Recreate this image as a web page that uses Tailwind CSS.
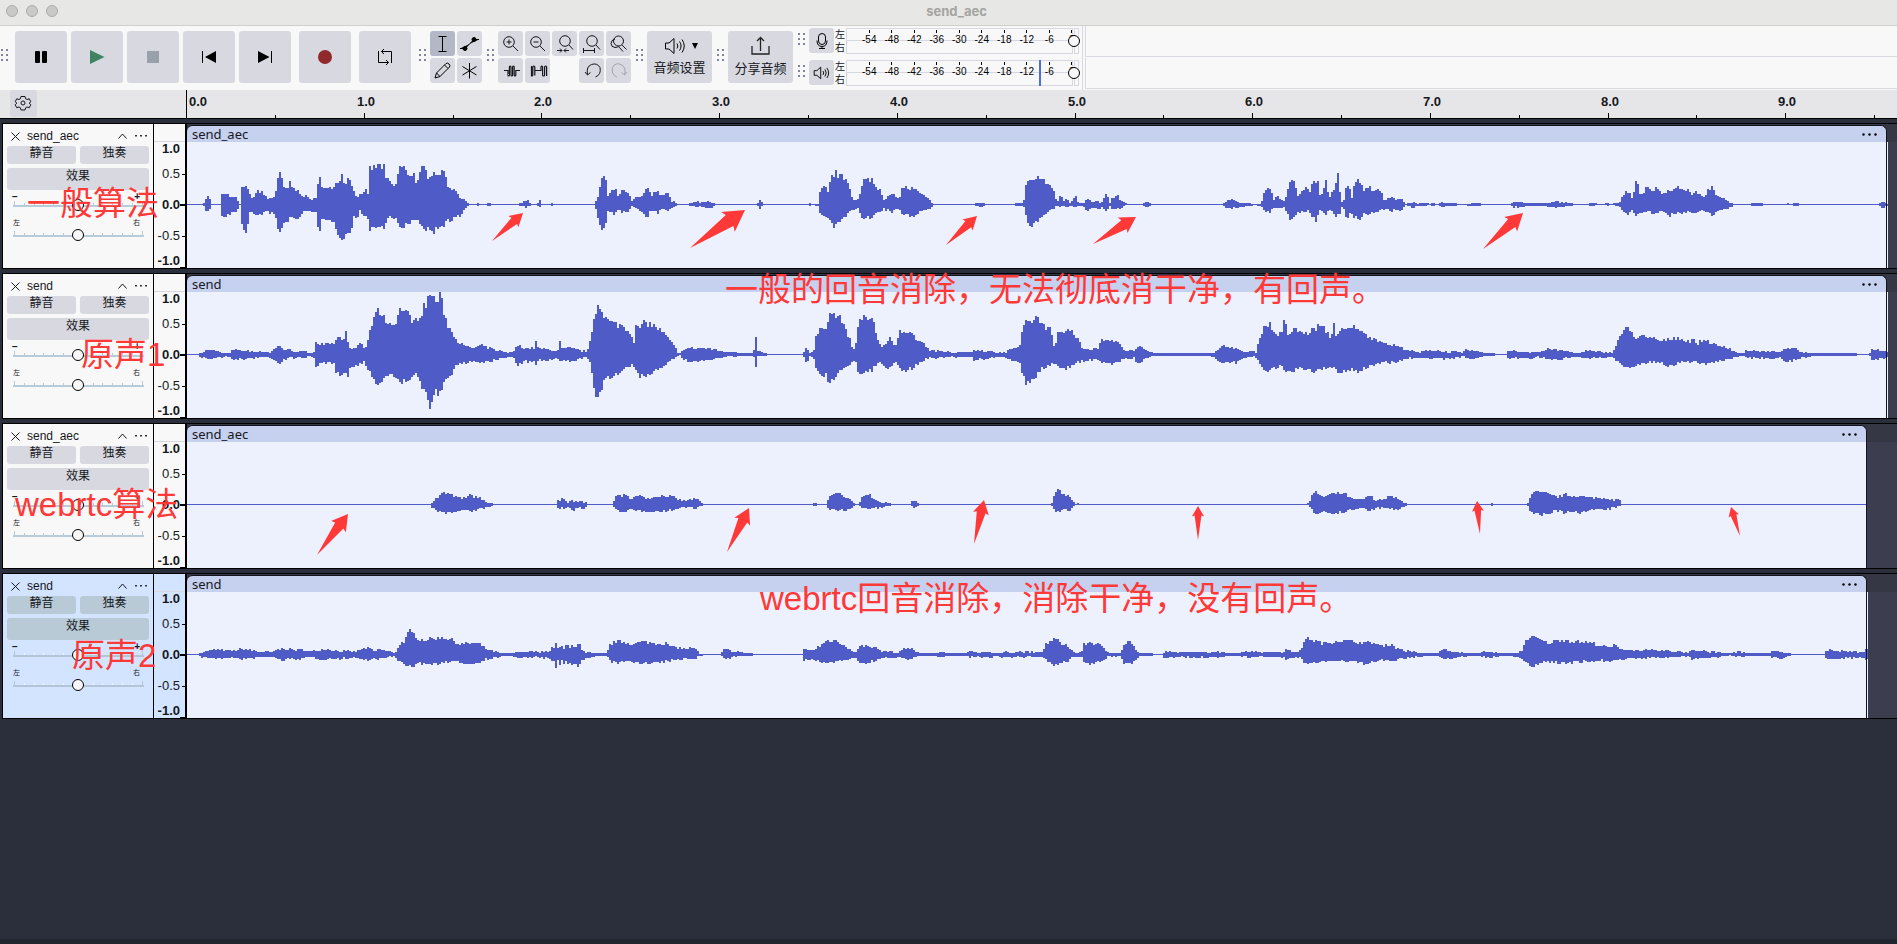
<!DOCTYPE html>
<html lang="zh-CN">
<head>
<meta charset="utf-8">
<title>send_aec</title>
<script src="https://cdn.jsdelivr.net/npm/@tailwindcss/browser@4"></script>
</head>
<body class="relative flex h-screen flex-col overflow-hidden bg-[#2b2f3b] font-['Liberation_Sans','Noto_Sans_CJK_SC',sans-serif] text-[#16181d]">

<svg class="hidden" aria-hidden="true">
  <symbol id="grip" viewBox="0 0 7 12"><path fill="#83849c" d="M0 0h2v2H0zM5 0h2v2H5zM0 5h2v2H0zM5 5h2v2H5zM0 10h2v2H0zM5 10h2v2H5z"/></symbol>
  <symbol id="lens" viewBox="0 0 25 25"><circle cx="11" cy="11" r="5.3"/><path d="M15 15l5 5"/></symbol>
  <symbol id="speaker" viewBox="0 0 22 18"><path d="M1.5 6v6h3.5l5 4.500V1.500L5 6zM13 6.500q1.800 2.500 0 5M15.500 4.500q3.200 4.500 0 9M18 2.500q4.500 6.500 0 13"/></symbol>
</svg>

<header class="grid h-[26px] shrink-0 grid-cols-[1fr_auto_1fr] items-start border-b border-[#cfcfcc] bg-[#e7e7e5] pt-[3px]">
  <div class="flex gap-2 pt-[2px] pl-[6px]">
    <button aria-label="关闭" class="size-3 rounded-full border border-[#acacaa] bg-[#c9c9c7]"></button>
    <button aria-label="最小化" class="size-3 rounded-full border border-[#acacaa] bg-[#c9c9c7]"></button>
    <button aria-label="缩放" class="size-3 rounded-full border border-[#acacaa] bg-[#c9c9c7]"></button>
  </div>
  <h1 class="pl-4 font-['Inter',sans-serif] text-[13px] leading-4 font-bold text-[#a4a4a1]">send_aec</h1>
</header>

<div class="flex h-16 shrink-0 items-start bg-[#f8f8f8] pl-px">
  <svg class="mt-[23px] mr-[7px] h-3 w-[7px] shrink-0"><use href="#grip"/></svg>
  <div class="mt-[5px] flex shrink-0 gap-1">
    <button aria-label="暂停" class="size-[52px] rounded-[3px] bg-[#d8d8e0]"><svg viewBox="0 0 52 52"><rect x="20" y="20" width="5" height="12" rx="1"/><rect x="27" y="20" width="5" height="12" rx="1"/></svg></button>
    <button aria-label="播放" class="size-[52px] rounded-[3px] bg-[#d8d8e0]"><svg viewBox="0 0 52 52"><path fill="#3f8362" d="M19 19v14l14.500-7z"/></svg></button>
    <button aria-label="停止" class="size-[52px] rounded-[3px] bg-[#d8d8e0]"><svg viewBox="0 0 52 52"><path fill="#9aa0aa" d="M20 20h12v12H20z"/></svg></button>
    <button aria-label="跳到开头" class="size-[52px] rounded-[3px] bg-[#d8d8e0]"><svg viewBox="0 0 52 52"><path d="M19 20h1v12h-1zM33 20v12l-11-6z"/></svg></button>
    <button aria-label="跳到结尾" class="size-[52px] rounded-[3px] bg-[#d8d8e0]"><svg viewBox="0 0 52 52"><path d="M32 20h1v12h-1zM19 20v12l11.500-6z"/></svg></button>
    <button aria-label="录音" class="ml-1 size-[52px] rounded-[3px] bg-[#d8d8e0]"><svg viewBox="0 0 52 52"><circle cx="26" cy="26" r="7" fill="#90292c"/></svg></button>
    <button aria-label="循环" class="ml-1 size-[52px] rounded-[3px] bg-[#d8d8e0]"><svg viewBox="0 0 52 52" fill="none" stroke="#000"><path d="M19.500 20v11.500h10M32.500 32V20.500h-10M25 18l-2.500 2.500L25 23M27 29l2.500 2.500L27 34"/></svg></button>
  </div>

  <svg class="mt-[23px] ml-2 mr-1 h-3 w-[7px] shrink-0"><use href="#grip"/></svg>
  <div class="mt-[5px] grid shrink-0 grid-cols-2 gap-[2px]">
    <button aria-label="选择工具" class="size-[25px] rounded-[3px] bg-[#b3b8c6]"><svg viewBox="0 0 25 25" fill="none" stroke="#000"><path d="M8.500 5.500h8M8.500 20.500h8M12.500 5.500v15"/></svg></button>
    <button aria-label="包络工具" class="size-[25px] rounded-[3px] bg-[#d8d8e0]"><svg viewBox="0 0 25 25" stroke="#000"><path d="M3 17.500h5L17 8.500h5"/><circle cx="8" cy="17.500" r="2"/><circle cx="17" cy="8.500" r="2"/></svg></button>
    <button aria-label="绘制工具" class="size-[25px] rounded-[3px] bg-[#d8d8e0]"><svg viewBox="0 0 25 25" fill="none" stroke="#000"><path d="M5 20l1.500-5L16 5.500q1.500-1 3 .5t.5 3L10 18.500zM14.500 7l3.500 3.500M6.500 15l3.500 3.500"/></svg></button>
    <button aria-label="多功能工具" class="size-[25px] rounded-[3px] bg-[#d8d8e0]"><svg viewBox="0 0 25 25" stroke="#000"><path d="M12.500 5v15.500M5.500 8.500l14 8.500M19.500 8.500l-14 8.500"/></svg></button>
  </div>

  <svg class="mt-[23px] ml-[5px] mr-1 h-3 w-[7px] shrink-0"><use href="#grip"/></svg>
  <div class="mt-[5px] grid shrink-0 grid-cols-5 gap-[2px]">
    <button aria-label="放大" class="size-[25px] rounded-[3px] bg-[#d8d8e0]"><svg viewBox="0 0 25 25" fill="none" stroke="#15171c"><use href="#lens"/><path d="M8.500 11h5M11 8.500v5"/></svg></button>
    <button aria-label="缩小" class="size-[25px] rounded-[3px] bg-[#d8d8e0]"><svg viewBox="0 0 25 25" fill="none" stroke="#15171c"><use href="#lens"/><path d="M8.500 11h5"/></svg></button>
    <button aria-label="适合选区" class="size-[25px] rounded-[3px] bg-[#d8d8e0]"><svg viewBox="0 0 25 25" fill="none" stroke="#15171c"><circle cx="13" cy="10" r="5.300"/><path d="M17 14l4 4.500M5 19.500h5M12 19.500h5M8 17.500l2 2-2 2M14 17.500l-2 2 2 2"/></svg></button>
    <button aria-label="适合项目" class="size-[25px] rounded-[3px] bg-[#d8d8e0]"><svg viewBox="0 0 25 25" fill="none" stroke="#15171c"><circle cx="13" cy="10" r="5.300"/><path d="M17 14l4 4.500M4.500 17v5M15.500 17v5M5 19.500h10"/></svg></button>
    <button aria-label="切换缩放" class="size-[25px] rounded-[3px] bg-[#d8d8e0]"><svg viewBox="0 0 25 25" fill="none" stroke="#15171c"><circle cx="12.500" cy="10" r="5"/><path d="M16 14l4.500 4.500M9 8q-4 1-4 4.500t4 4q2.500 0 4-1.500M12.500 15.500l4.500 5"/></svg></button>
    <button aria-label="修剪选区外音频" class="size-[25px] rounded-[3px] bg-[#d8d8e0]"><svg viewBox="0 0 25 25" fill="none" stroke="#15171c" stroke-width="1.200"><path d="M6 12.500h4V17q0 1 .7 1t.7-1V9q0-1 .8-1t.8 1v8q0 1 .8 1t.8-1V9q0-1 .8-1t.8 1v8q0 1 .8 1t.8-1v-4.500H22"/></svg></button>
    <button aria-label="静音选区" class="size-[25px] rounded-[3px] bg-[#d8d8e0]"><svg viewBox="0 0 25 25" fill="none" stroke="#15171c" stroke-width="1.200"><path d="M6.500 8v10q1.300 0 1.300-1V9q0-1 1-1t1 1v8.500V12.500H16V9q0-1 .8-1t.8 1v8q0 1 1 1t1-1V9q0-1 1-1t1 1v9"/></svg></button>
    <button aria-label="撤销" class="col-start-4 size-[25px] rounded-[3px] bg-[#d8d8e0]"><svg viewBox="0 0 25 25" fill="none" stroke="#15171c"><path d="M8.500 16.500q-1.500-8 4-10t8.500 3q1.500 7-4.500 9.500M6 14l2.500 3 3-2.500"/></svg></button>
    <button aria-label="重做" class="size-[25px] rounded-[3px] bg-[#d8d8e0]"><svg viewBox="0 0 25 25" fill="none" stroke="#9fa6b2"><path d="M18.500 16.500q2-7.500-3.500-10t-8.500 3q-1.500 7 4.500 9.500M21 14l-2.500 3-3-2.500"/></svg></button>
  </div>

  <svg class="mt-[23px] ml-[5px] mr-1 h-3 w-[7px] shrink-0"><use href="#grip"/></svg>
  <button class="mt-[5px] flex h-[52px] w-[65px] shrink-0 flex-col items-center rounded-[3px] bg-[#d8d8e0] pt-[6px]">
    <span class="flex items-center gap-[6px] pl-[2px]"><svg class="h-[18px] w-[22px]" fill="none" stroke="#000"><use href="#speaker"/></svg><svg class="h-[6px] w-[6px]" viewBox="0 0 6 6"><path d="M0 0h6L3 6z"/></svg></span>
    <span class="text-[13px] leading-[26px]">音频设置</span>
  </button>

  <svg class="mt-[23px] ml-[5px] mr-1 h-3 w-[7px] shrink-0"><use href="#grip"/></svg>
  <button class="mt-[5px] flex h-[52px] w-[65px] shrink-0 flex-col items-center rounded-[3px] bg-[#d8d8e0] pt-[5px]">
    <svg class="h-5 w-[19px]" viewBox="0 0 19 20" fill="none" stroke="#222" stroke-width="1.300"><path d="M1 10v8h17v-8M9.500 15V2M6 5l3.500-3.500L13 5"/></svg>
    <span class="text-[13px] leading-[26px]">分享音频</span>
  </button>

  <div class="mt-[2px] ml-[5px] flex shrink-0 flex-col gap-[7px]">
    <div class="flex h-[25px] items-start">
      <svg class="mt-[5px] mr-1 h-3 w-[7px]"><use href="#grip"/></svg>
      <button aria-label="录音电平" class="size-[25px] rounded-[3px] bg-[#d8d8e0]"><svg viewBox="0 0 25 25" fill="none" stroke="#000"><rect x="9.500" y="5.500" width="7" height="11" rx="3.500"/><path d="M8 12.500q0 6 5 6t5-6M13 18.500v2M10 20.500h6"/></svg></button>
      <div class="flex w-3 flex-col items-center text-[10px] leading-[13px]"><span>左</span><span>右</span></div>
      <div class="meter relative h-[26px] w-[233px]"></div>
    </div>
    <div class="flex h-[25px] items-start">
      <svg class="mt-[5px] mr-1 h-3 w-[7px]"><use href="#grip"/></svg>
      <button aria-label="播放电平" class="size-[25px] rounded-[3px] bg-[#d8d8e0] p-1"><svg viewBox="0 0 22 18" fill="none" stroke="#000" stroke-width="1.200"><use href="#speaker"/></svg></button>
      <div class="flex w-3 flex-col items-center text-[10px] leading-[13px]"><span>左</span><span>右</span></div>
      <div class="meter relative h-[26px] w-[233px]" data-peak="193"></div>
    </div>
  </div>
  <div class="ml-[3px] flex h-full flex-1 flex-col gap-px border-l border-[#d9d9e0] pl-[2px]">
    <div class="h-[31px] border-b border-l border-[#d9d9e0]"></div>
    <div class="h-[31px] border-b border-l border-[#d9d9e0]"></div>
  </div>
</div>

<div class="flex h-[29px] shrink-0 items-start border-b border-black bg-[#e6e6e8]">
  <div class="w-[186px] shrink-0 pl-[10px]">
    <button aria-label="时间轴选项" class="size-[27px] rounded-[3px] bg-[#d8d8e0]"><svg viewBox="0 0 27 27" fill="none" stroke="#15171c"><circle cx="13" cy="13" r="2"/><path stroke-linejoin="round" d="M11 6.500h4l.7 2.300 1.300.7 2.300-.7 1.500 3-1.700 1.400 1.700 1.500-1.500 3-2.300-.7-1.300.7-.7 2.300h-4l-.7-2.300-1.300-.7-2.300.7-1.500-3 1.700-1.500-1.700-1.400 1.500-3 2.300.7 1.300-.7z"/></svg></button>
  </div>
  <div id="timeline" class="relative h-7 flex-1 overflow-hidden border-l border-black text-[13px] leading-4 font-bold"></div>
</div>

<main id="tracks" class="flex flex-1 flex-col gap-1 pt-1"></main>
<footer class="h-[5px] shrink-0 bg-[#22252f]"></footer>

<div class="pointer-events-none absolute inset-0 text-[33px] leading-10 whitespace-nowrap text-[#ff3838]">
  <svg id="arrows" class="absolute inset-0 size-full" fill="#ff3838"></svg>
  <p class="absolute top-[184px] left-[27px]">一般算法</p>
  <p class="absolute top-[270px] left-[725px]">一般的回音消除，无法彻底消干净，有回声。</p>
  <p class="absolute top-[335px] left-[81px]">原声1</p>
  <p class="absolute top-[485px] left-[15px]">webrtc算法</p>
  <p class="absolute top-[579px] left-[760px]">webrtc回音消除，消除干净，没有回声。</p>
  <p class="absolute top-[636px] left-[72px]">原声2</p>
</div>

<script>
// Envelope data: groups of [start px, horizontal units per px, "x,up,down;..."], heights in thirds of a pixel.
const waves = [
 [
  [180,2.613,"17,1,1;52,1,1;60,4,4;64,18,14;70,28,24;76,14,12;79,2,2;104,2,2;105,33,28;110,30,38;120,30,34;130,22,28;148,18,18;152,2,1;158,2,1;159,48,55;168,50,85;176,46,58;181,24,18;192,22,32;200,40,28;212,38,30;224,18,20;240,20,26;247,28,36;250,60,50;256,98,90;262,94,84;266,48,56;280,48,50;283,74,40;287,52,38;300,44,46;320,26,24;345,14,18;354,18,18;357,22,50;359,94,90;366,92,82;369,50,44;385,46,50;398,50,46;403,76,60;412,60,88;420,102,96;426,64,98;432,66,92;440,98,78;444,60,80;455,32,26;460,24,48;466,26,20;478,30,28;480,48,34;488,34,36;492,38,60;494,110,84;500,108,66;520,116,70;530,112,66;534,78,52;545,70,40;560,46,36;564,80,54;572,112,68;582,110,74;590,92,60;610,90,46;618,56,40;620,76,40;630,104,72;636,110,72;645,84,74;655,94,92;665,94,74;680,92,68;688,98,62;694,78,48;700,44,46;712,48,42;720,44,34;730,20,36;745,10,10;752,2,2;770,2,2;775,4,4;780,1,1;800,2,2;806,5,5;815,1,1;882,1,1;890,8,8;905,12,6;914,2,2;932,1,1;936,18,10;941,2,1;966,1,1;970,3,3;974,1,1;1080,1,1;1085,8,12;1090,22,40;1096,58,68;1102,92,78;1110,76,58;1114,22,16;1122,30,20;1130,44,26;1140,40,24;1144,18,12;1152,40,22;1170,40,20;1176,6,4;1186,18,8;1200,20,20;1212,36,32;1222,54,36;1228,20,14;1236,42,22;1248,36,24;1256,24,10;1264,34,20;1276,28,18;1280,10,12;1290,8,6;1298,1,1;1324,1,1;1330,5,4;1345,7,6;1360,8,8;1390,8,8;1396,1,1;1507,1,1;1511,18,12;1516,10,8;1521,3,2;1526,1,1"],
  [760,2.613,"20,1,1;124,1,1;128,4,4;134,1,1;150,2,4;154,34,30;164,50,34;172,48,36;176,32,34;180,60,50;186,86,62;196,94,64;206,84,48;220,78,40;228,68,24;236,30,22;245,14,12;256,14,10;260,36,32;268,72,38;290,76,40;298,54,28;312,46,24;320,16,14;335,22,18;345,34,24;352,18,14;362,18,16;366,44,26;374,52,28;386,46,32;400,46,32;415,32,22;432,20,16;445,8,10;452,1,1;560,1,1;563,7,8;572,5,8;590,2,2;596,1,1;662,1,1;668,4,4;686,5,5;690,30,10;695,76,50;704,74,68;716,74,54;726,82,46;740,68,30;750,60,22;764,52,14;770,16,4;776,8,5;783,34,8;790,10,6;800,20,8;808,4,6;815,14,4;822,32,10;830,4,4;843,6,6;850,16,16;858,14,16;864,6,8;875,10,8;888,6,10;894,14,8;900,28,18;906,24,16;912,4,4;918,20,12;932,24,12;942,10,10;955,2,1;996,1,1;1002,6,6;1014,6,8;1024,1,1;1206,1,1;1214,6,8;1230,16,12;1246,6,8;1260,4,6;1290,2,2;1308,2,4;1314,32,20;1322,54,22;1334,42,22;1338,10,8;1350,30,12;1358,12,10;1368,10,8;1374,28,20;1384,70,46;1396,68,42;1402,20,28;1412,40,22;1424,56,20;1434,30,22;1444,78,40;1450,72,46;1458,70,30;1462,8,6;1470,52,30;1478,78,30;1484,16,14;1496,44,20;1504,60,40;1508,92,30;1512,40,38;1516,8,6;1522,6,8;1530,50,44;1538,60,30;1544,20,24;1550,60,36;1562,80,46"],
  [1330,2.765,"84,64,44;88,40,30;98,50,30;108,62,24;114,36,20;125,40,26;138,48,18;143,34,16;146,12,18;155,16,14;168,22,20;178,14,14;192,18,18;200,12,10;206,2,1;214,3,3;230,6,8;240,2,3;262,6,5;272,1,1;284,6,6;292,1,1;305,6,6;330,4,5;345,4,5;350,1,1;380,2,3;405,4,6;420,2,1;424,1,1;498,1,1;505,6,7;530,6,6;560,3,5;590,4,5;610,6,8;630,8,8;660,5,5;676,1,1;708,1,1;725,6,5;738,1,1;752,1,1;765,5,3;772,1,1;785,4,3;800,6,6;806,22,16;815,34,22;821,38,28;824,78,40;828,14,10;836,30,24;842,74,38;850,62,34;856,22,22;866,40,22;875,60,20;884,42,26;895,44,24;905,52,26;912,30,20;925,40,26;938,46,34;948,44,26;960,50,26;972,48,30;985,42,24;1000,30,20;1012,38,26;1025,28,16;1034,18,18;1044,48,24;1055,50,34;1064,30,20;1080,24,16;1094,14,14;1106,4,8;1116,1,1;1154,1,1;1165,5,4;1195,4,4;1200,1,1;1260,1,1;1264,3,2;1268,1,1;1280,3,4;1292,4,4;1296,1,1;1515,1,1;1524,7,8;1532,5,6;1542,2,2"]
 ],
 [
  [180,2.613,"17,1,1;42,1,1;50,5,6;70,13,12;88,11,11;105,5,7;130,5,6;134,14,14;150,14,14;175,10,12;200,9,8;235,6,8;245,18,16;258,26,26;270,15,14;290,12,10;315,8,8;345,6,6;348,8,8;349,36,34;355,38,36;360,30,28;400,28,26;403,46,60;412,54,60;420,40,60;432,66,62;438,24,60;444,20,20;447,14,34;460,22,32;470,38,26;480,14,20;485,24,38;495,80,54;508,110,76;516,156,92;522,116,80;540,98,62;553,86,52;560,96,72;575,142,88;590,124,74;612,96,56;625,120,90;640,150,120;648,178,154;655,180,140;665,158,112;678,178,120;688,124,86;698,86,74;712,60,46;725,38,30;740,24,24;765,20,20;785,26,22;805,20,20;820,14,16;840,10,8;855,5,7;870,10,12;880,28,32;895,20,22;915,18,20;925,18,22;927,42,40;931,20,18;960,14,16;985,12,12;990,40,20;993,20,42;997,16,14;1015,20,22;1040,12,14;1062,8,6;1068,30,20;1078,100,90;1084,130,132;1092,156,136;1100,140,104;1104,112,72;1130,92,62;1150,88,54;1175,66,34;1185,38,34;1188,80,52;1200,80,64;1212,96,70;1228,90,56;1250,76,40;1275,46,22;1290,22,12;1300,3,2;1306,3,3;1315,18,18;1340,18,20;1370,18,18;1400,14,12;1420,6,7;1450,6,6;1485,3,3;1495,4,4;1497,14,10;1500,14,10;1501,52,38;1504,50,38;1505,12,8;1520,5,5;1530,3,3;1534,1,1"],
  [760,2.613,"-20,1,1;-10,1,1;0,5,5;12,6,6;18,1,1;110,1,1;117,24,24;123,16,18;128,4,4;138,8,10;145,60,44;155,76,54;170,84,62;178,112,84;190,124,74;200,112,54;212,106,42;222,74,36;232,46,28;238,20,20;247,18,16;254,100,50;266,108,56;290,108,48;298,80,36;306,42,26;315,24,26;326,30,40;338,48,38;345,28,26;354,26,26;360,66,44;374,72,50;392,62,42;410,46,28;425,34,16;440,14,10;470,8,9;510,6,6;550,6,6;555,12,18;575,12,14;600,8,10;640,6,8;655,18,18;675,20,18;684,70,60;692,94,82;704,98,76;722,112,64;730,98,46;745,84,34;758,72,28;764,22,28;770,24,30;775,68,40;795,72,42;815,70,36;828,48,22;838,18,20;865,16,18;882,18,14;890,46,22;905,46,28;925,42,26;940,26,18;950,12,12;975,10,10;982,20,22;992,22,26;1010,10,10;1025,5,5;1050,3,3;1090,3,3;1150,3,3;1170,4,4;1190,8,12;1205,22,26;1220,26,26;1240,18,24;1250,12,14;1270,8,8;1296,8,8;1302,50,30;1315,84,44;1328,94,48;1340,66,42;1362,60,36;1366,104,52;1378,60,48;1395,74,46;1410,68,40;1425,60,48;1445,76,50;1460,86,46;1475,72,40;1490,50,36;1497,92,38;1502,60,50;1520,72,50;1545,78,44;1562,84,52"],
  [1330,2.765,"83,66,48;95,60,40;115,50,32;130,44,26;140,42,24;150,30,22;175,28,24;190,22,18;210,14,12;230,8,10;250,6,8;270,14,10;290,12,12;310,8,14;335,8,10;365,5,6;375,14,12;395,10,12;405,8,8;430,4,4;470,2,2;485,2,2;490,14,14;515,8,10;550,8,10;580,8,8;605,16,16;635,12,14;665,6,6;690,4,6;705,12,10;730,8,10;750,6,8;782,8,8;790,34,20;802,60,30;815,78,40;830,68,34;845,50,32;860,56,28;875,46,24;895,50,22;912,38,24;935,46,34;962,52,26;980,40,22;1000,42,20;1015,34,22;1036,46,28;1052,34,24;1070,24,22;1090,24,16;1105,16,12;1125,5,6;1140,3,4;1148,12,10;1180,10,10;1250,8,10;1255,18,20;1285,16,16;1300,8,10;1330,3,5;1380,3,3;1440,3,3;1490,2,2;1495,16,14;1510,14,16;1525,10,12;1540,10,10"]
 ],
 [
  [390,2.613,"-530,1,1;102,1,2;108,10,10;120,18,18;135,34,22;145,34,26;160,26,22;185,18,16;205,26,20;222,24,18;232,18,14;245,10,10;258,4,6;272,1,1;435,1,1;437,22,14;439,24,18;441,12,10;444,6,18;447,18,8;452,14,14;455,16,16;458,4,6;465,6,8;472,14,12;477,6,20;484,12,8;490,4,14;495,12,6;502,6,14;510,10,8;513,1,1;577,1,1;585,18,14;592,28,20;612,26,20;625,20,16;658,26,20;672,18,18;690,24,20;720,26,20;735,22,16;752,14,10;765,10,8;780,14,8;798,16,10;806,10,8;815,1,1;1098,1,1;1102,4,4;1110,3,3;1114,1,1;1136,1,1;1144,18,12;1155,32,16;1168,34,18;1180,26,18;1195,20,16;1205,12,8;1212,2,1;1224,2,1;1230,18,8;1240,24,12;1252,28,12;1264,18,12;1275,8,10;1300,5,4;1315,1,1;1355,1,1;1368,12,10;1382,1,1"],
  [980,3,"212,1,1;217,22,16;226,42,20;240,36,22;250,30,14;262,26,18;272,18,12;280,6,4;284,1,1;292,3,1;296,1,1;980,1,1;986,12,8;995,34,20;1005,38,26;1018,24,22;1032,24,20;1045,30,24;1080,34,24;1098,28,20;1110,16,16;1140,14,10;1155,20,14;1168,26,18;1180,14,12;1210,14,10;1218,24,14;1240,22,14;1255,14,14;1270,6,6;1282,1,1"],
  [1450,3,"118,1,1;121,4,4;128,4,4;130,1,1;230,1,1;238,26,20;245,36,26;270,36,32;290,30,28;305,26,20;320,22,18;345,30,26;360,24,22;385,26,26;405,22,18;425,20,14;460,20,16;480,16,12;488,8,8;495,16,8;505,12,6;512,1,1;1248,1,1"]
 ],
 [
  [0,3,"561,1,1;590,2,2;600,6,6;625,12,10;650,14,12;690,10,8;718,16,14;745,14,12;775,8,8;815,6,6;830,14,14;850,18,16;880,14,12;905,14,12;930,8,8;960,16,14;990,14,12;1020,10,12;1060,8,8;1090,18,16;1105,18,14;1120,10,14;1140,16,12;1165,8,8;1180,4,4"],
  [390,2.613,"12,4,8;20,28,20;35,40,26;45,62,34;50,68,36;60,60,34;75,44,28;105,46,28;135,52,24;160,44,22;178,30,22;208,34,28;235,30,20;245,18,14;260,12,12;285,4,6;310,3,3;325,6,8;350,8,8;380,8,8;412,8,10;419,22,12;424,16,24;430,34,18;432,30,50;436,20,14;441,18,30;446,24,14;452,18,34;458,30,20;464,28,36;470,20,18;475,30,34;480,20,18;485,28,32;491,34,34;497,22,14;500,14,14;510,4,12;515,6,8;550,4,4;565,4,4;572,30,18;590,40,26;610,36,22;640,32,22;655,38,24;680,34,28;720,32,20;735,22,18;765,18,12;792,18,12;808,2,3;828,2,2;862,1,1;868,14,12;880,14,12;900,8,6;930,4,4;955,2,2;965,1,1;1076,1,1;1078,14,18;1100,12,14;1120,24,20;1140,42,26;1160,42,22;1180,32,18;1195,16,18;1210,8,10;1218,10,8;1222,22,26;1240,26,24;1265,22,18;1285,8,8;1305,10,10;1325,4,6;1340,20,12;1360,16,12;1380,4,4;1400,4,5;1440,6,6;1500,4,4;1510,10,8;1540,6,8"],
  [980,3,"30,6,8;40,4,5;95,8,8;160,6,6;186,6,6;195,30,18;210,40,28;222,46,32;240,34,22;255,30,22;268,16,12;285,5,6;302,6,6;310,32,24;325,36,30;350,32,24;365,20,16;380,8,8;420,5,6;430,30,26;445,42,26;458,24,22;468,8,8;480,3,4;500,3,3;545,2,2;550,8,8;600,6,8;670,6,8;680,8,10;715,8,8;740,4,4;780,4,5;790,10,8;820,8,8;850,6,6;900,6,6;915,14,14;940,8,12;962,10,8;965,38,20;985,50,28;1000,40,24;1030,32,18;1070,42,20;1110,40,20;1150,34,28;1170,36,22;1200,26,18;1230,30,20;1250,18,14;1280,10,12;1310,5,6;1370,5,5;1385,14,12;1405,12,12"],
  [1450,3,"0,10,12;30,6,7;80,3,3;95,8,8;115,8,8;150,4,5;204,4,6;208,10,10;216,12,14;220,36,20;230,48,28;245,52,34;260,48,28;290,34,20;335,44,26;375,38,22;415,36,20;450,26,18;475,20,20;490,28,14;510,16,14;540,12,12;600,12,10;660,10,8;700,5,5;716,8,8;720,14,16;745,10,12;790,8,8;838,3,2;850,8,7;880,6,6;930,3,3;960,3,3;965,12,10;990,8,10;1010,4,5;1030,2,1;1120,1,1;1126,12,12;1170,10,12;1240,8,8;1243,18,14;1253,18,14"]
 ]
];

// Turns the envelope into a stepped outline, two pixels per column.
function wavePath(groups, end) {
  const pts = groups.flatMap(([x0, s, d]) => d.split(';').map(p => {
    const [x, u, v] = p.split(',').map(Number);
    return [x0 + x / s, u / 3, v / 3];
  }));
  let seed = 7, i = 0, d = '';
  const rnd = () => (seed = (seed * 16807) % 2147483647) / 2147483647 - 0.5;
  for (let x = 187; x < end; x += 2) {
    while (i < pts.length - 2 && pts[i + 1][0] <= x) i++;
    const a = pts[i], b = pts[i + 1];
    const t = Math.max(0, Math.min(1, (x - a[0]) / ((b[0] - a[0]) || 1)));
    let u = a[1] + (b[1] - a[1]) * t, v = a[2] + (b[2] - a[2]) * t;
    if (u > 2) u += rnd() * (1.5 + u * 0.18);
    if (v > 2) v += rnd() * (1.5 + v * 0.18);
    u = Math.round(Math.max(u - 0.4, 0)); v = Math.round(Math.max(v - 0.4, 0));
    const w = Math.min(2, end - x);
    d += `M${x} ${-u - 1}h${w}v${u + v + 1}h${-w}z`;
  }
  return d;
}

const tracks = [
  { name: 'send_aec', width: 1700, tail: 1 },
  { name: 'send', width: 1700, tail: 1 },
  { name: 'send_aec', width: 1680, tail: 0 },
  { name: 'send', width: 1680, tail: 1, selected: true }
];

const sliderClass = "col-start-1 row-start-1 h-[14px] w-[130px] appearance-none bg-transparent [&::-webkit-slider-thumb]:size-3 [&::-webkit-slider-thumb]:appearance-none [&::-webkit-slider-thumb]:rounded-full [&::-webkit-slider-thumb]:border [&::-webkit-slider-thumb]:border-black [&::-webkit-slider-thumb]:bg-[#f8f8f8]";
const slider = (id, label, light) => `
  <div class="grid h-[14px]">
    <svg class="col-start-1 row-start-1 h-[14px] w-[131px]" viewBox="0 0 131 14" fill="${light ? '#b4c6d6' : '#b7cbd9'}"><path d="M0 7h131v2H0zM1 3h1v4H1zM129 3h1v4h-1z"/><path ${light ? 'fill="#eef4fb"' : ''} d="M11 5h1v2h-1zM21 5h1v2h-1zM30 5h1v2h-1zM40 5h1v2h-1zM50 5h1v2h-1zM80 5h1v2h-1zM89 5h1v2h-1zM99 5h1v2h-1zM109 5h1v2h-1zM119 5h1v2h-1z"/></svg>
    <input id="${id}" type="range" min="0" max="100" value="50" aria-label="${label}" class="${sliderClass}">
  </div>`;
const mark = (t, bold, tick, margin) => `
  <div class="flex h-[14px] ${margin} ${bold ? 'font-bold' : ''} items-center justify-end">${t}<span class="flex w-[5px] justify-end ${t === '-1.0' ? 'self-end' : ''}"><i class="${tick}"></i></span></div>`;

document.getElementById('tracks').innerHTML = tracks.map((t, n) => {
  const bg = t.selected ? 'bg-[#d2e4ff]' : 'bg-[#f8f8f8]';
  const btn = t.selected ? 'bg-[#b8cad6]' : 'bg-[#d8d8e0]';
  return `
  <section class="ml-[2px] flex h-[146px] shrink-0 border-y border-l border-black">
    <div class="${bg} flex w-[150px] shrink-0 flex-col px-1 pt-[3px] text-[12px]">
      <div class="mb-px flex h-[18px] items-center pl-1">
        <button aria-label="关闭轨道"><svg class="size-[9px]" viewBox="0 0 9 9" stroke="#16181d"><path d="M.5 .5l8 8M8.500 .5l-8 8"/></svg></button>
        <h2 class="ml-[7px] flex-1 leading-4">${t.name}</h2>
        <button aria-label="折叠"><svg class="h-[6px] w-[9px]" viewBox="0 0 9 6" fill="none" stroke="#16181d"><path d="M.5 5.500l4-4.500 4 4.500"/></svg></button>
        <button aria-label="轨道菜单" class="mr-[2px] ml-2"><svg class="h-[2px] w-3" viewBox="0 0 12 2" fill="#333"><path d="M0 0h2v1.500H0zM5 0h2v1.500H5zM10 0h2v1.500h-2z"/></svg></button>
      </div>
      <div class="grid grid-cols-2 gap-1">
        <button class="${btn} h-[18px] rounded-[3px] pb-1 leading-[14px]">静音</button>
        <button class="${btn} h-[18px] rounded-[3px] pb-1 leading-[14px]">独奏</button>
      </div>
      <button class="${btn} mt-1 h-[22px] rounded-[3px] pb-[6px] leading-4">效果</button>
      <div class="flex flex-col px-[6px]">
        <div class="-ml-px flex h-2 items-center justify-between pt-[5px] pr-[3px] text-[10px] leading-none font-bold"><span>−</span><span>+</span></div>
        ${slider('gain' + n, '音量', t.selected)}
        <div class="flex h-4 items-center justify-between pt-[4px] pr-[3px] text-[7px] leading-[9px]"><span>左</span><span>右</span></div>
        ${slider('pan' + n, '声像', t.selected)}
      </div>
    </div>
    <div class="${bg} w-[34px] shrink-0 border-r-2 border-l border-black text-[13px] leading-[14px]">
      <div class="h-[18px] border-b border-[#d8d8e0]"></div>
      ${mark('1.0', true, '', '')}
      ${mark('0.5', false, 'h-px w-[3px] bg-black', 'mt-[11px]')}
      ${mark('0.0', true, 'h-[2px] w-[5px] bg-black', 'mt-[17px]')}
      ${mark('-0.5', false, 'h-px w-[3px] bg-black', 'mt-[17px]')}
      ${mark('-1.0', true, 'h-px w-[5px] bg-black', 'mt-[11px]')}
    </div>
    <div class="flex-1 overflow-hidden bg-[linear-gradient(#353744_18px,#3c3e4f_18px)] pt-px">
      <div class="flex h-[17px] items-center justify-between rounded-t-[6px] border-t border-r border-[#14151b] bg-[#c6d0ef] pr-[9px] pl-[5px]" style="width:${t.width}px">
        <h3 class="font-['Noto_Sans',sans-serif] text-[13px] leading-4">${t.name}</h3>
        <button aria-label="片段菜单"><svg class="h-[3px] w-[15px]" viewBox="0 0 15 3"><circle cx="1.500" cy="1.500" r="1.200"/><circle cx="7.500" cy="1.500" r="1.200"/><circle cx="13.500" cy="1.500" r="1.200"/></svg></button>
      </div>
      <svg class="block h-[126px] bg-[#edf1fe]" style="width:${t.width + t.tail}px" viewBox="187 -63 ${t.width + t.tail} 126" shape-rendering="crispEdges">
        <path fill="#4f5cc8" d="${wavePath(waves[n], 187 + t.width + t.tail)}"/>
        <rect x="${186 + t.width}" y="-63" width="1" height="126" fill="#14151b"/>
      </svg>
    </div>
  </section>`;
}).join('');

const secondWidth = 177.7;
let ruler = '';
for (let h = 0; h <= 19; h++) {
  const x = Math.round(h / 2 * secondWidth);
  if (h) ruler += `<i class="absolute bottom-0 w-px bg-black ${h % 2 ? 'h-[3px]' : 'h-[5px]'}" style="left:${x - 1}px"></i>`;
  if (h % 2 === 0) ruler += `<span class="absolute top-1 ${h ? '-translate-x-1/2' : ''}" style="left:${h ? x + 1 : 2}px">${(h / 2).toFixed(1)}</span>`;
}
document.getElementById('timeline').innerHTML = ruler;

document.querySelectorAll('.meter').forEach(m => {
  const labels = ['-54', '-48', '-42', '-36', '-30', '-24', '-18', '-12', '-6', '0'];
  m.innerHTML = `
    <div class="flex h-full gap-px">
      <div class="grid w-[227px] grid-rows-2 border border-[#d8d8e0]"><div class="border-b border-[#d8d8e0]"></div></div>
      <div class="w-[5px] border border-[#d8d8e0]"></div>
    </div>
    ${m.dataset.peak ? `<i class="absolute top-0 h-full w-[2px] bg-[#4a6fdc]" style="left:${m.dataset.peak}px"></i>` : ''}
    <div class="absolute top-[2px] left-[12px] grid w-[225px] grid-cols-10 text-center text-[10px] leading-[13px] text-black">
      ${labels.map(l => `<span class="flex flex-col items-center"><i class="h-[3px] w-px bg-black"></i>${l}</span>`).join('')}
    </div>
    <button aria-label="电平滑块" class="absolute top-[7px] left-[222px] size-3 rounded-full border border-black bg-[#f8f8f8]"></button>`;
});

// Callout arrows: tail x, tail y, tip x, tip y.
const arrows = [
  [492,241,523,213],[690,248,745,210],[946,245,977,216],[1093,244,1136,217],[1483,249,1523,213],
  [317,555,348,514],[727,552,749,508],[974,544,984,500],[1198,540,1198,506],[1480,534,1477,501],[1740,536,1731,507]
];
document.getElementById('arrows').innerHTML = arrows.map(([ax, ay, bx, by]) => {
  const dx = bx - ax, dy = by - ay;
  const at = (f, s) => `${(ax + dx * f - dy * s).toFixed(1)},${(ay + dy * f + dx * s).toFixed(1)}`;
  return `<polygon points="${[at(0, 0), at(.72, .1), at(.69, .18), at(1, 0), at(.69, -.18), at(.72, -.1)].join(' ')}"/>`;
}).join('');
</script>
</body>
</html>
